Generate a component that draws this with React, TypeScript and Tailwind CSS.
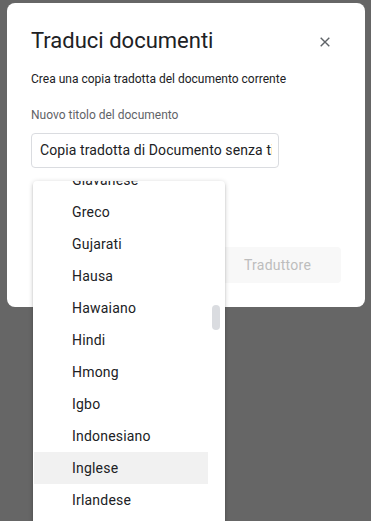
import React from "react";

const LANGUAGES = [
  "Giavanese",
  "Greco",
  "Gujarati",
  "Hausa",
  "Hawaiano",
  "Hindi",
  "Hmong",
  "Igbo",
  "Indonesiano",
  "Inglese",
  "Irlandese",
  "Islandese",
];

const HIGHLIGHTED = "Inglese";

function CloseIcon() {
  return (
    <svg width="10" height="10" viewBox="0 0 10 10" aria-hidden="true">
      <path
        d="M0.7 0.7 L9.3 9.3 M9.3 0.7 L0.7 9.3"
        stroke="#5f6368"
        strokeWidth="1.4"
        fill="none"
      />
    </svg>
  );
}

export default function App() {
  return (
    <div className="relative h-[521px] w-[371px] overflow-hidden bg-[#666666] pl-[7px] pt-[3px] font-['Roboto',sans-serif] text-[#202124]">
      {/* Dialog */}
      <div className="flex h-[304px] w-[358px] flex-col rounded-lg bg-white px-6 pt-6">
        <div className="flex items-center justify-between">
          <h1 className="text-[22px] leading-7 font-normal text-[#202124]">
            Traduci documenti
          </h1>
          <button className="mr-[11px] mt-[2px] flex items-center" aria-label="Chiudi">
            <CloseIcon />
          </button>
        </div>

        <p className="mt-4 text-[12px] leading-4 text-[#202124]">
          Crea una copia tradotta del documento corrente
        </p>

        <p className="mt-5 text-[12px] leading-4 text-[#5f6368]">
          Nuovo titolo del documento
        </p>

        <div className="mt-[10px] flex h-[35px] w-[248px] items-center rounded border border-[#dadce0] pl-2 pr-[6px]">
          <div className="w-full overflow-hidden whitespace-nowrap text-[14px] tracking-[0.1px] text-[#202124]">
            Copia tradotta di Documento senza titolo
          </div>
        </div>

        <div className="mt-[79px] flex justify-end">
          <button className="h-9 w-[124px] rounded bg-[#f8f8f8] pl-[27px] text-left text-[14px] font-normal tracking-[0.25px] text-[#bdbdbd]">
            Traduttore
          </button>
        </div>
      </div>

      {/* Language menu, open over the dialog */}
      <div className="absolute left-[33px] top-[181px] h-[360px] w-[192px] overflow-hidden rounded-t bg-white pl-px shadow-[0_2px_2px_0_rgba(0,0,0,0.14),0_3px_1px_-2px_rgba(0,0,0,0.12),0_1px_5px_0_rgba(0,0,0,0.2)]">
        <ul className="mt-[-17px]">
          {LANGUAGES.map((lang) => (
            <li
              key={lang}
              className={`flex h-8 w-[174px] items-center pl-[38px] text-[14px] tracking-[0.2px] text-[#202124] ${
                lang === HIGHLIGHTED ? "bg-[#f1f1f1]" : ""
              }`}
            >
              {lang}
            </li>
          ))}
        </ul>
        <div className="absolute left-[179px] top-[124px] h-[25px] w-2 rounded-full bg-[#dadce0]" />
      </div>
    </div>
  );
}
